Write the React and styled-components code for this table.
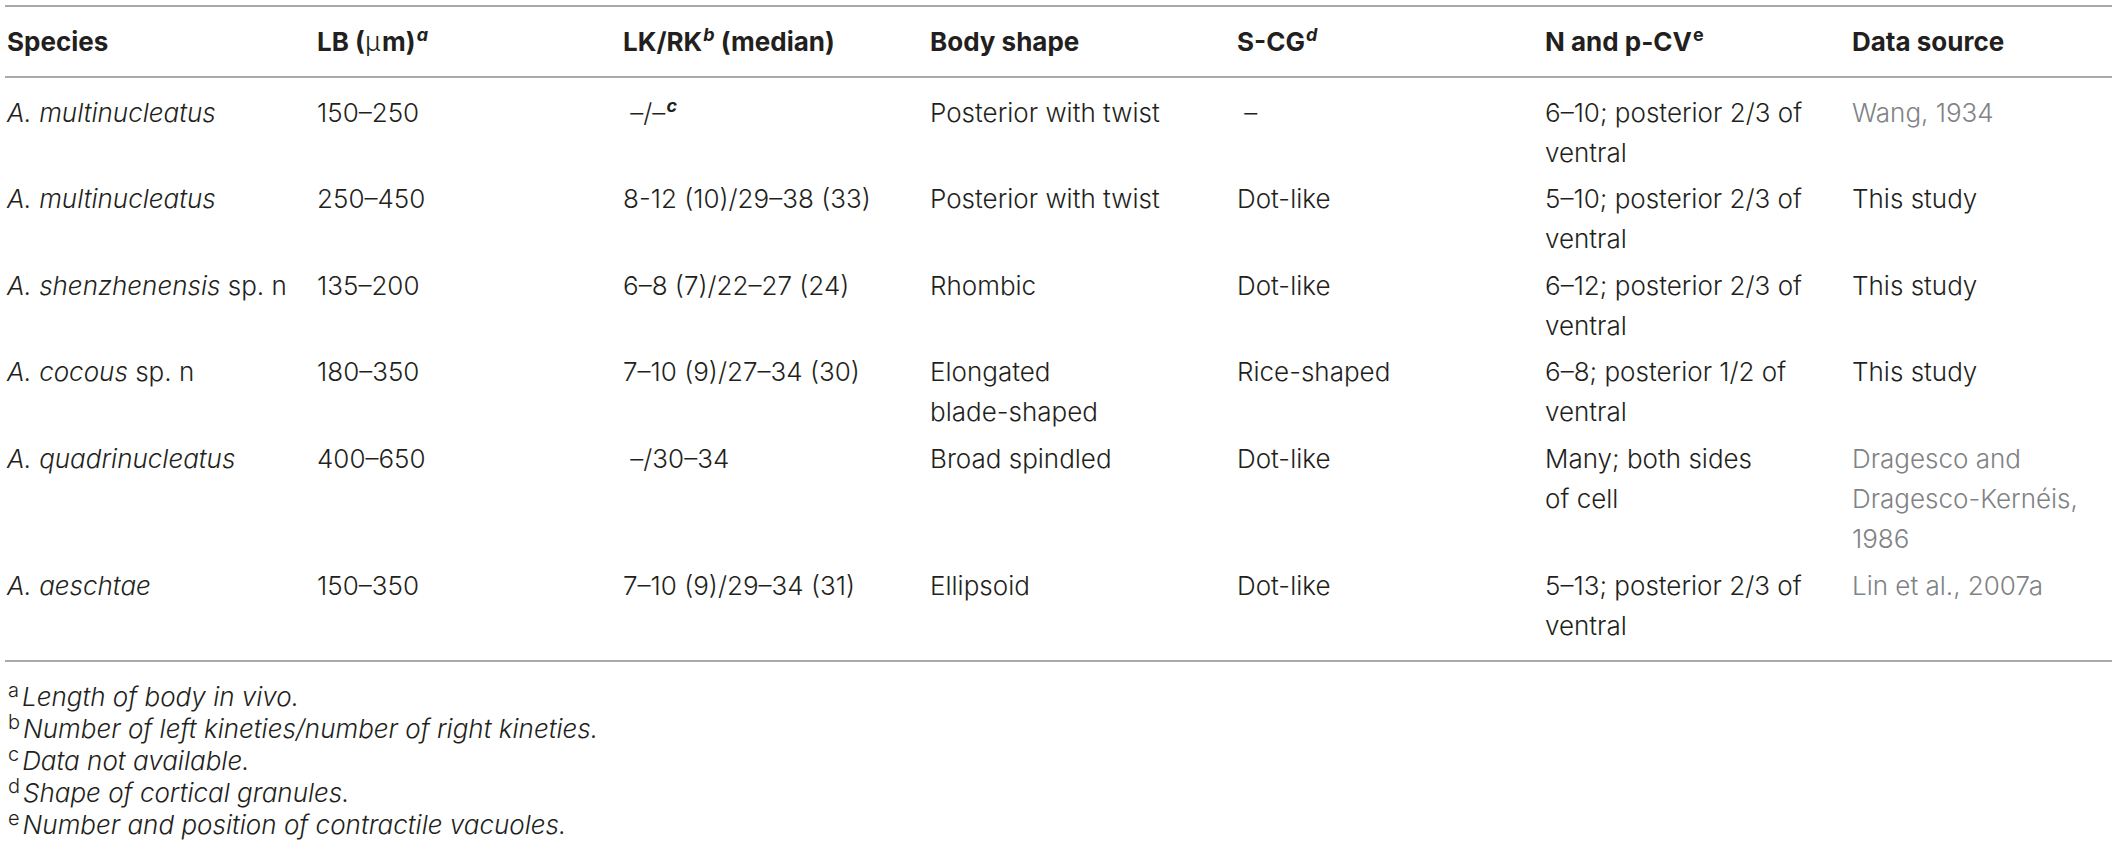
import React from 'react';
import styled, { createGlobalStyle } from 'styled-components';

const GlobalStyle = createGlobalStyle`
  body {
    margin: 0;
    background: #ffffff;
  }
`;

const Page = styled.div`
  padding: 5px 0 0 5px;
  font-family: Inter, "Liberation Sans", Arial, sans-serif;
  color: #231f20;
`;

const Table = styled.table`
  border-collapse: separate;
  border-spacing: 0;
  table-layout: fixed;
  width: 2107px;
  border-top: 2px solid #a7a9ac;
  border-bottom: 2px solid #a7a9ac;
`;

const HeadCell = styled.th`
  text-align: left;
  vertical-align: top;
  font-size: 26px;
  line-height: 40px;
  font-weight: 700;
  padding: 15px 2px 14px;
  border-bottom: 2px solid #a7a9ac;
`;

const Cell = styled.td`
  vertical-align: top;
  font-size: 26px;
  line-height: 40px;
  font-weight: 300;
  padding: 3.3px 2px 3.3px;
  color: ${(p) => (p.$muted ? '#808285' : '#231f20')};

  tr:first-child > & {
    padding-top: 14.6px;
  }
  tr:last-child > & {
    padding-bottom: 14.4px;
  }
`;

const Genus = styled.i`
  font-style: italic;
`;

const Sup = styled.sup`
  font-size: 18px;
  line-height: 0;
  vertical-align: 10px;
  font-style: ${(p) => (p.$upright ? 'normal' : 'italic')};
  font-weight: ${(p) => (p.$bold ? 700 : 'inherit')};
  margin-left: 1px;
`;

const Mu = styled.span`
  font-weight: 300;
  margin-right: 2px;
`;

const Notes = styled.div`
  margin-top: 19px;
  padding-left: 3px;
  font-size: 26px;
  line-height: 32px;
  font-weight: 300;
  font-style: italic;
`;

const Note = styled.div``;

const NoteMark = styled.span`
  font-style: normal;
  font-size: 20px;
  line-height: 0;
  vertical-align: 9px;
  margin-right: 3px;
`;

const cols = [310, 306, 307, 307, 308, 307, 262];

const rows = [
  {
    species: <Genus>A. multinucleatus</Genus>,
    lb: '150–250',
    lk: (
      <>
        {'\u00a0'}–/–<Sup $bold>c</Sup>
      </>
    ),
    shape: 'Posterior with twist',
    scg: '\u00a0–',
    cv: '6–10; posterior 2/3 of ventral',
    src: 'Wang, 1934',
    muted: true,
  },
  {
    species: <Genus>A. multinucleatus</Genus>,
    lb: '250–450',
    lk: '8-12 (10)/29–38 (33)',
    shape: 'Posterior with twist',
    scg: 'Dot-like',
    cv: '5–10; posterior 2/3 of ventral',
    src: 'This study',
  },
  {
    species: (
      <>
        <Genus>A. shenzhenensis</Genus> sp. n
      </>
    ),
    lb: '135–200',
    lk: '6–8 (7)/22–27 (24)',
    shape: 'Rhombic',
    scg: 'Dot-like',
    cv: '6–12; posterior 2/3 of ventral',
    src: 'This study',
  },
  {
    species: (
      <>
        <Genus>A. cocous</Genus> sp. n
      </>
    ),
    lb: '180–350',
    lk: '7–10 (9)/27–34 (30)',
    shape: (
      <>
        Elongated
        <br />
        blade-shaped
      </>
    ),
    scg: 'Rice-shaped',
    cv: '6–8; posterior 1/2 of ventral',
    src: 'This study',
  },
  {
    species: <Genus>A. quadrinucleatus</Genus>,
    lb: '400–650',
    lk: '\u00a0–/30–34',
    shape: 'Broad spindled',
    scg: 'Dot-like',
    cv: (
      <>
        Many; both sides
        <br />
        of cell
      </>
    ),
    src: 'Dragesco and Dragesco-Kernéis, 1986',
    muted: true,
  },
  {
    species: <Genus>A. aeschtae</Genus>,
    lb: '150–350',
    lk: '7–10 (9)/29–34 (31)',
    shape: 'Ellipsoid',
    scg: 'Dot-like',
    cv: '5–13; posterior 2/3 of ventral',
    src: 'Lin et al., 2007a',
    muted: true,
  },
];

const notes = [
  ['a', 'Length of body in vivo.'],
  ['b', 'Number of left kineties/number of right kineties.'],
  ['c', 'Data not available.'],
  ['d', 'Shape of cortical granules.'],
  ['e', 'Number and position of contractile vacuoles.'],
];

export default function App() {
  return (
    <Page>
      <GlobalStyle />
      <Table>
        <colgroup>
          {cols.map((w, i) => (
            <col key={i} width={w} />
          ))}
        </colgroup>
        <thead>
          <tr>
            <HeadCell>Species</HeadCell>
            <HeadCell>
              LB (<Mu>μ</Mu>m)<Sup>a</Sup>
            </HeadCell>
            <HeadCell>
              LK/RK<Sup>b</Sup> (median)
            </HeadCell>
            <HeadCell>Body shape</HeadCell>
            <HeadCell>
              S-CG<Sup>d</Sup>
            </HeadCell>
            <HeadCell>
              N and p-CV<Sup $upright>e</Sup>
            </HeadCell>
            <HeadCell>Data source</HeadCell>
          </tr>
        </thead>
        <tbody>
          {rows.map((r, i) => (
            <tr key={i}>
              <Cell>{r.species}</Cell>
              <Cell>{r.lb}</Cell>
              <Cell>{r.lk}</Cell>
              <Cell>{r.shape}</Cell>
              <Cell>{r.scg}</Cell>
              <Cell>{r.cv}</Cell>
              <Cell $muted={r.muted}>{r.src}</Cell>
            </tr>
          ))}
        </tbody>
      </Table>
      <Notes>
        {notes.map(([mark, text]) => (
          <Note key={mark}>
            <NoteMark>{mark}</NoteMark>
            {text}
          </Note>
        ))}
      </Notes>
    </Page>
  );
}
